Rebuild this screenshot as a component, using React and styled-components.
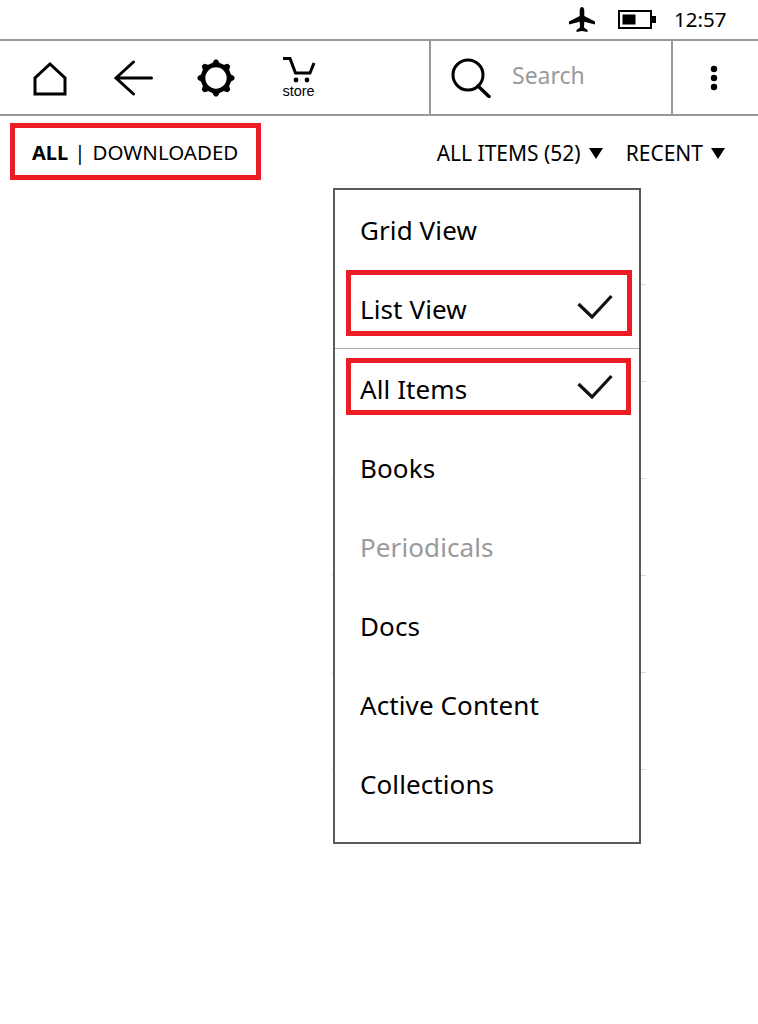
import React from "react";
import styled, { createGlobalStyle } from "styled-components";

const Global = createGlobalStyle`
  html, body { margin: 0; padding: 0; background: #fff; }
  body { font-family: "Noto Sans", "Open Sans", sans-serif; color: #000; }
`;

const Page = styled.div`
  position: relative;
  width: 758px;
  height: 1024px;
  overflow: hidden;
  background: #fff;
`;

const StatusBar = styled.div`
  height: 39px;
  display: flex;
  align-items: center;
  justify-content: flex-end;
  padding-right: 32px;
  box-sizing: border-box;
`;

const Clock = styled.span`
  font-size: 20.5px;
  line-height: 39px;
  margin-left: 18px;
  width: 52px;
`;

const Toolbar = styled.div`
  height: 73px;
  display: flex;
  border-top: 2px solid #999;
  border-bottom: 2px solid #999;
`;

const Nav = styled.div`
  width: 429px;
  padding-left: 8px;
  box-sizing: border-box;
  display: flex;
  align-items: center;
`;

const NavSlot = styled.div`
  width: 83px;
  height: 100%;
  display: flex;
  align-items: center;
  justify-content: center;
`;

const SearchBox = styled.div`
  width: 242px;
  box-sizing: border-box;
  border-left: 2px solid #999;
  display: flex;
  align-items: center;
  padding-left: 20px;
  gap: 21px;
`;

const SearchText = styled.span`
  font-size: 23px;
  color: #9a9a9a;
  margin-bottom: 6px;
`;

const More = styled.div`
  flex: 1;
  border-left: 2px solid #999;
  display: flex;
  align-items: center;
  justify-content: center;
  padding-right: 4px;
`;

const FilterBar = styled.div`
  display: flex;
  justify-content: space-between;
  align-items: center;
  padding: 7px 33px 0 10px;
`;

const ScopeBox = styled.div`
  width: 251px;
  height: 57px;
  box-sizing: border-box;
  border: 5px solid #ed1c24;
  display: flex;
  align-items: center;
  padding: 1px 0 0 17px;
  font-size: 20.5px;
`;

const ScopeAll = styled.b`
  font-weight: 700;
  font-size: 20px;
`;

const ScopeSep = styled.span`
  margin: 0 7px 0 6px;
`;

const Sorts = styled.div`
  display: flex;
  align-items: center;
  font-size: 21px;
  gap: 23px;
  padding-top: 2px;
`;

const Sort = styled.span`
  display: flex;
  align-items: center;
  gap: 8px;
`;

const Caret = styled.i`
  width: 0;
  height: 0;
  border-left: 7px solid transparent;
  border-right: 7px solid transparent;
  border-top: 11px solid #000;
  margin-top: 1px;
`;

const BookList = styled.div`
  margin: 8px 0 0 332px;
  width: 314px;
`;

const BookRow = styled.div`
  height: 96px;
  border-bottom: 1px solid #d8d8d8;
`;

const Menu = styled.div`
  position: absolute;
  left: 333px;
  top: 188px;
  width: 308px;
  height: 656px;
  box-sizing: border-box;
  border: 2px solid #5a5a5a;
  background: #fff;
`;

const Item = styled.div`
  position: relative;
  height: 79px;
  display: flex;
  align-items: center;
  justify-content: space-between;
  padding: 0 26px 0 25px;
  font-size: 26px;
  letter-spacing: 0.1px;
  color: ${(p) => (p.$muted ? "#9a9a9a" : "#000")};
`;

const Divider = styled.div`
  height: 1px;
  background: #aaa;
`;

const Highlight = styled.span`
  position: absolute;
  left: 11px;
  width: ${(p) => p.$w}px;
  top: ${(p) => p.$top}px;
  height: ${(p) => p.$h}px;
  box-sizing: border-box;
  border: 5px solid #ed1c24;
`;

const CheckSvg = styled.svg`
  margin-top: -3px;
`;

const Check = () => (
  <CheckSvg width="36" height="26" viewBox="0 0 36 26" fill="none" stroke="#111" strokeWidth="3.2">
    <path d="M1.5 10 L15 23 L34.5 2" />
  </CheckSvg>
);

const Plane = () => (
  <svg width="28" height="26" viewBox="0 0 28 26" fill="#000">
    <path d="M14 0 C15.5 0 16.3 2 16.3 4 L16.3 9 L27 14.5 L27 17.5 L16.3 14.8 L16 20.5 L19.5 23 L19.5 25 L14 24 L8.5 25 L8.5 23 L12 20.5 L11.7 14.8 L1 17.5 L1 14.5 L11.7 9 L11.7 4 C11.7 2 12.5 0 14 0 Z" />
  </svg>
);

const Battery = () => (
  <svg width="38" height="20" viewBox="0 0 38 20">
    <rect x="1" y="1" width="32" height="17" fill="none" stroke="#000" strokeWidth="2" />
    <rect x="4.5" y="4.5" width="13" height="10" fill="#000" />
    <rect x="34" y="6" width="4" height="7" fill="#000" />
  </svg>
);

const Home = () => (
  <svg width="38" height="38" viewBox="0 0 38 38" fill="none" stroke="#000" strokeWidth="3">
    <path d="M4 35 L4 19 L19 5 L34 19 L34 35 Z" strokeLinejoin="miter" />
  </svg>
);

const Back = () => (
  <svg width="40" height="36" viewBox="0 0 40 36" fill="none" stroke="#000" strokeWidth="3" strokeLinecap="round">
    <path d="M38.5 18 L3 18 M20.5 2 L3 18 L20.5 34" />
  </svg>
);

const Gear = () => {
  const teeth = [0, 45, 90, 135, 180, 225, 270, 315];
  return (
    <svg width="40" height="40" viewBox="0 0 40 40">
      <circle cx="20" cy="20" r="13" fill="none" stroke="#000" strokeWidth="4.6" />
      {teeth.map((a) => (
        <path key={a} d="M15.5 7.5 L18.7 2 L21.3 2 L24.5 7.5 Z" fill="#000" stroke="#000" strokeWidth="1" strokeLinejoin="round" transform={`rotate(${a} 20 20)`} />
      ))}
    </svg>
  );
};

const CartWrap = styled.div`
  display: flex;
  flex-direction: column;
  align-items: center;
  margin-top: -1px;
`;

const StoreLabel = styled.span`
  font-family: "Liberation Sans", Arial, sans-serif;
  font-size: 14.5px;
  line-height: 14px;
`;

const Cart = () => (
  <svg width="34" height="27" viewBox="0 0 34 27" fill="none" stroke="#000" strokeWidth="3">
    <path d="M1 1.5 L8 1.5 L13.5 16 L28 16 L32 6" />
    <circle cx="14" cy="23" r="2.4" fill="#000" stroke="none" />
    <circle cx="25" cy="23" r="2.4" fill="#000" stroke="none" />
  </svg>
);

const SearchIcon = () => (
  <svg width="40" height="40" viewBox="0 0 40 40" fill="none" stroke="#000" strokeLinecap="round">
    <circle cx="17" cy="17" r="15" strokeWidth="3" />
    <path d="M27 28 L38 38.5" strokeWidth="3.5" />
  </svg>
);

const Dots = () => (
  <svg width="10" height="26" viewBox="0 0 10 26" fill="#000">
    <circle cx="5" cy="4" r="3.2" />
    <circle cx="5" cy="13" r="3.2" />
    <circle cx="5" cy="22" r="3.2" />
  </svg>
);

const StatusIcon = styled.span`
  display: flex;
  margin-left: ${(p) => p.$gap || 0}px;
`;

const menuItems = [
  { label: "Grid View" },
  { label: "List View", check: true, box: { top: 1, h: 66, w: 286 } },
  { divider: true },
  { label: "All Items", check: true, box: { top: 9, h: 57, w: 285 } },
  { label: "Books" },
  { label: "Periodicals", muted: true },
  { label: "Docs" },
  { label: "Active Content" },
  { label: "Collections" },
];

export default function App() {
  return (
    <Page>
      <Global />
      <StatusBar>
        <StatusIcon><Plane /></StatusIcon>
        <StatusIcon $gap={22}><Battery /></StatusIcon>
        <Clock>12:57</Clock>
      </StatusBar>
      <Toolbar>
        <Nav>
          <NavSlot><Home /></NavSlot>
          <NavSlot><Back /></NavSlot>
          <NavSlot><Gear /></NavSlot>
          <NavSlot>
            <CartWrap>
              <Cart />
              <StoreLabel>store</StoreLabel>
            </CartWrap>
          </NavSlot>
        </Nav>
        <SearchBox>
          <SearchIcon />
          <SearchText>Search</SearchText>
        </SearchBox>
        <More><Dots /></More>
      </Toolbar>
      <FilterBar>
        <ScopeBox>
          <ScopeAll>ALL</ScopeAll>
          <ScopeSep>|</ScopeSep>
          <span>DOWNLOADED</span>
        </ScopeBox>
        <Sorts>
          <Sort>ALL ITEMS (52) <Caret /></Sort>
          <Sort>RECENT <Caret /></Sort>
        </Sorts>
      </FilterBar>
      <BookList>
        {[0, 1, 2, 3, 4, 5].map((i) => <BookRow key={i} />)}
      </BookList>
      <Menu>
        {menuItems.map((m, i) =>
          m.divider ? (
            <Divider key={i} />
          ) : (
            <Item key={i} $muted={m.muted}>
              {m.box && <Highlight $top={m.box.top} $h={m.box.h} $w={m.box.w} />}
              <span>{m.label}</span>
              {m.check && <Check />}
            </Item>
          )
        )}
      </Menu>
    </Page>
  );
}
